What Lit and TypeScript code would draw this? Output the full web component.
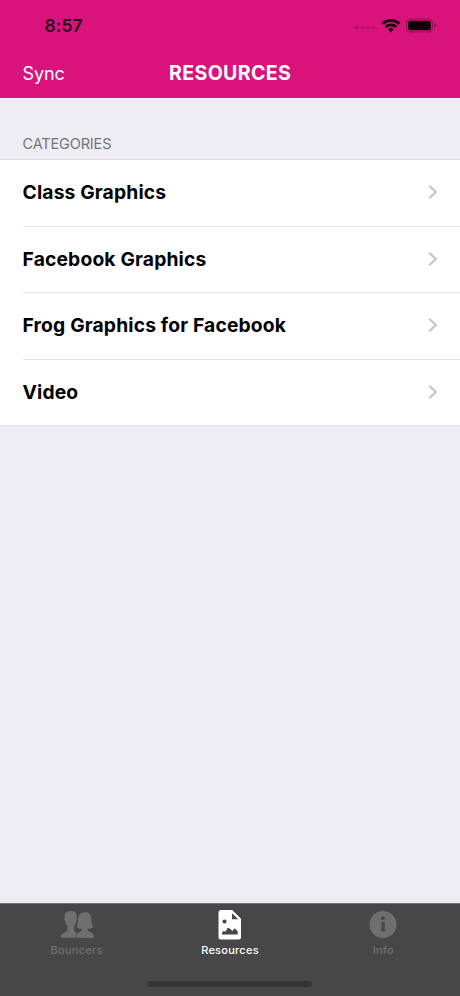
import { LitElement, html, css, svg } from "lit";
import { customElement } from "lit/decorators.js";

const chevron = html`<svg class="chevron" width="10" height="16" viewBox="0 0 10 16">
  <path d="M1.200 1.800 L7.800 8 L1.200 14.200" fill="none" stroke="#c5c5c9" stroke-width="2.200" />
</svg>`;

const peopleIcon = html`<svg width="34" height="30" viewBox="0 0 34 30" fill="currentColor">
  <path d="M25 2.200c-4.600 0-6.700 2.700-6.900 7-.1 3-.3 5.600-1.600 8.200 1.600.9 3.500 1.200 5.200 1.300v1.900c-.5 1.500-3.400 2.100-4.700 3-1 1-1.200 2.600-1.200 4.400H33.700c0-2.400-.3-4-1.500-4.900-1.600-1.200-3.900-1.300-4.500-2.600v-1.800c1.900-.1 3.700-.5 5.500-1.300-1.400-2.500-1.500-5.200-1.700-8.200-.2-4.300-2.300-7-6.500-7z" />
  <path d="M10.700 .8C6.300 .6 3.900 3.300 4.500 7.800c-1 .4-.6 3.200.5 3.700.3 2.100 1 3.600 2.100 4.800v4c-.6 1.500-3.300 2-4.800 3.200C.7 24.600.4 26 .2 28H15.600c.1-2.300.7-4 1.800-5-.9-.9-2.500-1.200-3-2.600v-4.100c1-1.200 1.700-2.700 2-4.800 1.200-.5 1.400-3.300.5-3.700C17.800 3.500 15.700 .5 10.700 .8z" stroke="#474747" stroke-width=".6" />
</svg>`;

const pictureIcon = html`<svg width="24" height="30" viewBox="0 0 24 30">
  <path fill="currentColor" fill-rule="evenodd" d="M3 0H14.200L23 8.800V27a2.500 2.500 0 0 1-2.500 2.500H3A2.500 2.500 0 0 1 .5 27V2.500A2.500 2.500 0 0 1 3 0zM14 3.200V9.300H20.300zM6.500 9.400a2.100 2.100 0 1 0 0 4.200a2.100 2.100 0 0 0 0-4.200zM4 24.600H19.700V21.500L16.800 18.200L14.300 20.900Q11.500 17.300 9.400 18.300L7.500 21.700L5.700 20.900L4 22.500z" />
</svg>`;

const infoIcon = html`<svg width="28" height="30" viewBox="0 0 28 30">
  <circle cx="14" cy="14.500" r="13.500" fill="currentColor" />
  <circle cx="14" cy="8.300" r="1.900" fill="#474747" />
  <path fill="#474747" d="M12 12.100h3.700v8h.7v1.200h-4.600v-1.200h.7v-6.800h-.5z" />
</svg>`;

const signalDots = [0, 1, 2, 3].map(
  (i) => svg`<circle cx=${3 + i * 5.500} cy="13.500" r="1.800" fill="#b01068" />`
);

@customElement("app-root")
export class AppRoot extends LitElement {
  static styles = css`
    :host {
      display: flex;
      flex-direction: column;
      height: 996px;
      background: #eeedf3;
      font-family: Inter, "Liberation Sans", sans-serif;
      color: #000;
    }
    svg { display: block; flex: none; }
    header { height: 98px; background: #da127c; display: flex; flex-direction: column; }
    .status { height: 50px; display: flex; justify-content: space-between; align-items: center; padding: 1px 22px 0 44.500px; box-sizing: border-box; }
    .time { font-size: 17.500px; font-weight: 600; letter-spacing: 0.1px; color: #24051a; }
    .status svg { margin-top: 1px; }
    .nav { height: 48px; display: grid; grid-template-columns: 1fr auto 1fr; align-items: center; padding: 0 22px 1px; box-sizing: border-box; color: #fff; }
    .sync { font-size: 18px; letter-spacing: -0.1px; padding-left: 0.500px; }
    .title { font-size: 19.600px; font-weight: 700; line-height: 24px; letter-spacing: 0.350px; margin: -1px -0.350px 0 0; }
    .section { height: 62px; box-sizing: border-box; padding: 37px 22.500px 0; font-size: 14.500px; line-height: 18px; color: #747479; letter-spacing: -0.15px; border-bottom: 1px solid #dddde1; }
    .list { background: #fff; border-bottom: 1px solid #e2e2e6; padding-left: 22.500px; }
    .row { height: 66.700px; box-sizing: border-box; display: flex; align-items: center; justify-content: space-between; padding: 0 22px 2px 0; border-bottom: 1px solid #e6e6e8; font-size: 19.300px; font-weight: 700; line-height: 24px; letter-spacing: 0.150px; }
    .row:last-child { border-bottom: 0; height: 65px; padding-bottom: 1px; }
    .tabs { margin-top: auto; height: 93px; background: #474747; display: grid; grid-template-columns: repeat(3, 1fr); grid-template-rows: 74px 1fr; box-sizing: border-box; border-top: 1px solid #747474; }
    .tab { display: flex; flex-direction: column; align-items: center; padding-top: 6px; color: #6f6f6f; font-size: 11px; line-height: 14px; font-weight: 500; letter-spacing: 0.25px; gap: 3px; }
    .active { color: #fff; }
    .home { grid-column: 1 / -1; justify-self: center; width: 164px; height: 6px; border-radius: 3px; background: #353535; margin-top: 3px; }
  `;

  render() {
    return html`
      <header>
        <div class="status">
          <span class="time">8:57</span>
          <svg width="84" height="24" viewBox="0 0 84 24">
            ${signalDots}
            <g fill="none" stroke="#16020c" stroke-width="2.800">
              <path d="M28.500 9.700a12.200 12.200 0 0 1 16.800 0" />
              <path d="M31.600 12.900a7.800 7.800 0 0 1 10.600 0" />
            </g>
            <path d="M34.100 15.200a4.200 4.200 0 0 1 5.600 0L36.900 18.400z" fill="#16020c" />
            <rect x="52.500" y="5" width="26" height="13" rx="3.800" fill="none" stroke="#8c1054" />
            <rect x="54.100" y="6.700" width="22.800" height="9.600" rx="2.200" fill="#100008" />
            <path d="M80.200 9.300q1.800 .8 1.800 2.200t-1.800 2.200z" fill="#8c1054" />
          </svg>
        </div>
        <div class="nav">
          <span class="sync">Sync</span>
          <span class="title">RESOURCES</span>
        </div>
      </header>
      <div class="section">CATEGORIES</div>
      <div class="list">
        ${["Class Graphics", "Facebook Graphics", "Frog Graphics for Facebook", "Video"].map(
          (name) => html`<div class="row"><span>${name}</span>${chevron}</div>`
        )}
      </div>
      <nav class="tabs">
        <div class="tab">${peopleIcon}<span>Bouncers</span></div>
        <div class="tab active">${pictureIcon}<span>Resources</span></div>
        <div class="tab">${infoIcon}<span>Info</span></div>
        <div class="home"></div>
      </nav>
    `;
  }
}
